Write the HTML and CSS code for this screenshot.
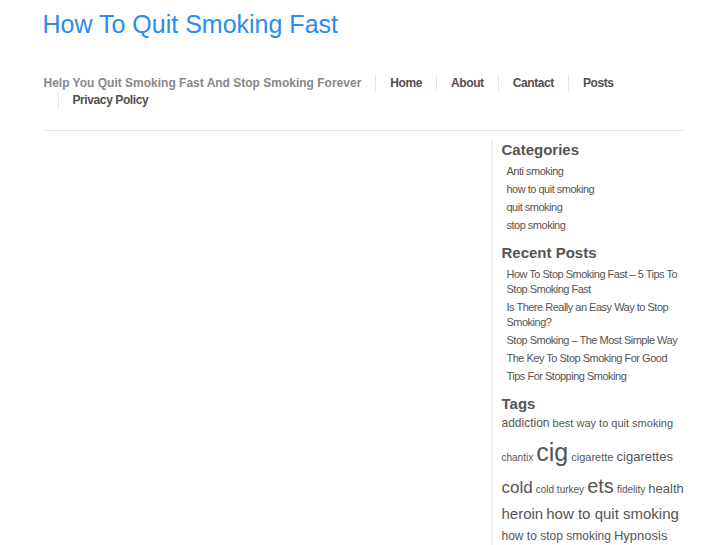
FILE: index.html
```html
<!DOCTYPE html>
<html lang="en">
<head>
    <meta charset="UTF-8">
    <meta name="viewport" content="width=device-width, initial-scale=1.0">
    <title>How To Quit Smoking Fast</title>
    <link rel="stylesheet" href="styles.css">
</head>
<body>
    <div class="wrap">
        <header class="site-header">
            <h1 class="site-title"><a href="#">How To Quit Smoking Fast</a></h1>

            <nav class="nav">
                <span class="tagline">Help You Quit Smoking Fast And Stop Smoking Forever</span>
                <a href="#">Home</a>
                <a href="#">About</a>
                <a href="#">Cantact</a>
                <a href="#">Posts</a>
                <a href="#">Privacy Policy</a>
            </nav>
        </header>

        <div class="main">
            <div class="content"></div>

            <aside class="sidebar">
                <div class="widget">
                    <h3>Categories</h3>
                    <ul>
                        <li><a href="#">Anti smoking</a></li>
                        <li><a href="#">how to quit smoking</a></li>
                        <li><a href="#">quit smoking</a></li>
                        <li><a href="#">stop smoking</a></li>
                    </ul>
                </div>

                <div class="widget">
                    <h3>Recent Posts</h3>
                    <ul>
                        <li><a href="#">How To Stop Smoking Fast – 5 Tips To Stop Smoking Fast</a></li>
                        <li><a href="#">Is There Really an Easy Way to Stop Smoking?</a></li>
                        <li><a href="#">Stop Smoking – The Most Simple Way</a></li>
                        <li><a href="#">The Key To Stop Smoking For Good</a></li>
                        <li><a href="#">Tips For Stopping Smoking</a></li>
                    </ul>
                </div>

                <div class="widget">
                    <h3>Tags</h3>
                    <div class="tags">
                        <a href="#" class="t12">addiction</a>
                        <a href="#" class="t11">best way to quit smoking</a>
                        <a href="#" class="t10">chantix</a>
                        <a href="#" class="t25">cig</a>
                        <a href="#" class="t11">cigarette</a>
                        <a href="#" class="t13">cigarettes</a>
                        <a href="#" class="t17">cold</a>
                        <a href="#" class="t10">cold turkey</a>
                        <a href="#" class="t20">ets</a>
                        <a href="#" class="t10">fidelity</a>
                        <a href="#" class="t13">health</a>
                        <a href="#" class="t15">heroin</a>
                        <a href="#" class="t15">how to quit smoking</a>
                        <a href="#" class="t12">how to stop smoking</a>
                        <a href="#" class="t13">Hypnosis</a>
                    </div>
                </div>
            </aside>
        </div>
    </div>
</body>
</html>
```

FILE: styles.css
```css
body {
    font-family: 'Liberation Sans', Arial, sans-serif;
    margin: 0;
    padding: 0;
    background: #fff;
    color: #555;
}

a {
    text-decoration: none;
}

.wrap {
    width: 642px;
    margin: 0 auto;
}

.site-header {
    padding-top: 9px;
    border-bottom: 1px solid #e5e5e5;
    padding-bottom: 21px;
}

.site-title {
    margin: 0;
    font-size: 25px;
    font-weight: normal;
    line-height: 30px;
}

.site-title a {
    color: #2b8ceb;
}

.nav {
    display: flex;
    flex-wrap: wrap;
    margin-top: 36px;
    padding-left: 15px;
    font-size: 12px;
    font-weight: bold;
    line-height: 17px;
}

.nav .tagline {
    color: #888;
    margin-left: -14px;
    padding-right: 14px;
}

.nav a {
    color: #505050;
    padding: 0 14px;
    letter-spacing: -0.4px;
    border-left: 1px solid #e5e5e5;
}

.main {
    display: flex;
    padding-top: 9px;
}

.content {
    flex: 1;
}

.sidebar {
    width: 183px;
    border-left: 2px solid #eee;
    padding-left: 9px;
    min-height: 420px;
}

.widget h3 {
    margin: 0;
    font-size: 15px;
    line-height: 20px;
    color: #555;
}

.widget ul {
    list-style: none;
    margin: 4px 0 10px;
    padding: 0 0 0 5px;
}

.widget li {
    font-size: 11px;
    line-height: 15px;
    letter-spacing: -0.5px;
    margin: 3px 0;
}

.widget li a {
    color: #555;
}

.tags {
    font-size: 11px;
    line-height: 1.55;
    margin-top: 0;
}

.tags a {
    color: #555;
}

.t10 { font-size: 10px; }
.t11 { font-size: 11px; }
.t12 { font-size: 12px; }
.t13 { font-size: 13px; }
.t15 { font-size: 15px; }
.t17 { font-size: 17px; }
.t20 { font-size: 20px; }
.t25 { font-size: 25px; }
```
